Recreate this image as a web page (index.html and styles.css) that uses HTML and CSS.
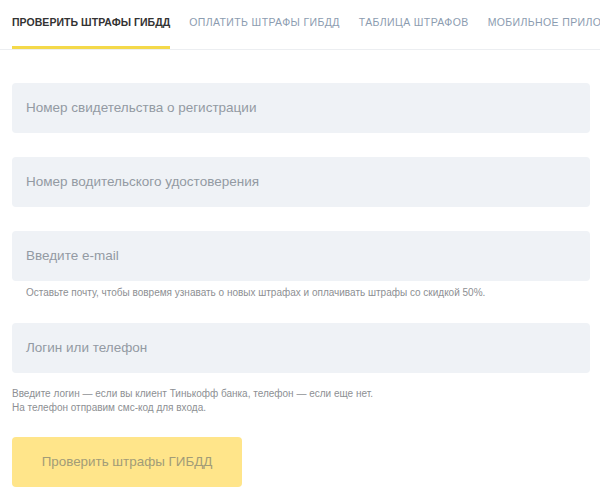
FILE: index.html
```html
<!DOCTYPE html>
<html lang="ru">
<head>
<meta charset="utf-8">
<link rel="stylesheet" href="styles.css">
</head>
<body>
<nav class="tabs">
  <div class="tab active">Проверить штрафы ГИБДД</div>
  <div class="tab">Оплатить штрафы ГИБДД</div>
  <div class="tab">Таблица штрафов</div>
  <div class="tab">Мобильное приложение</div>
</nav>
<form class="form">
  <div class="field"><div class="input">Номер свидетельства о регистрации</div></div>
  <div class="field"><div class="input">Номер водительского удостоверения</div></div>
  <div class="field">
    <div class="input">Введите e-mail</div>
    <p class="hint">Оставьте почту, чтобы вовремя узнавать о новых штрафах и оплачивать штрафы со скидкой 50%.</p>
  </div>
  <div class="field">
    <div class="input">Логин или телефон</div>
    <p class="hint hint-2">Введите логин — если вы клиент Тинькофф банка, телефон — если еще нет.<br>На телефон отправим смс-код для входа.</p>
  </div>
  <div class="button">Проверить штрафы ГИБДД</div>
</form>
</body>
</html>
```
FILE: styles.css
```css
html, body {
  margin: 0;
  padding: 0;
  background: #fff;
  overflow: hidden;
}
body {
  font-family: "Liberation Sans", Arial, sans-serif;
  width: 600px;
  height: 501px;
}
.tabs {
  display: flex;
  gap: 19px;
  padding: 0 0 0 12px;
  height: 49px;
  border-bottom: 1px solid #eceef1;
  white-space: nowrap;
  overflow: hidden;
}
.tab {
  font-size: 10.5px;
  text-transform: uppercase;
  letter-spacing: 0.38px;
  color: #8c9cb0;
  padding-top: 15px;
  height: 31px;
  box-sizing: content-box;
  border-bottom: 3px solid transparent;
  line-height: 14px;
}
.tab.active {
  color: #333;
  font-weight: bold;
  border-bottom-color: #f4d94a;
  letter-spacing: 0.05px;
}
.form {
  padding: 33px 10px 0 12px;
  display: flex;
  flex-direction: column;
}
.field {
  margin-bottom: 24px;
}
.input {
  height: 50px;
  background: #eff2f6;
  border-radius: 4px;
  color: #939aa3;
  font-size: 13.5px;
  line-height: 50px;
  padding-left: 14px;
}
.hint {
  margin: 5px 0 0 14px;
  font-size: 10px;
  line-height: 13px;
  color: #8d8f93;
}
.hint-2 {
  margin: 14px 0 0 0;
  line-height: 14px;
}
.field:nth-child(4) {
  margin-bottom: 22px;
}
.button {
  width: 230px;
  height: 50px;
  background: #ffe58a;
  border-radius: 4px;
  color: #a29c78;
  font-size: 13.4px;
  line-height: 50px;
  text-align: center;
}
```
